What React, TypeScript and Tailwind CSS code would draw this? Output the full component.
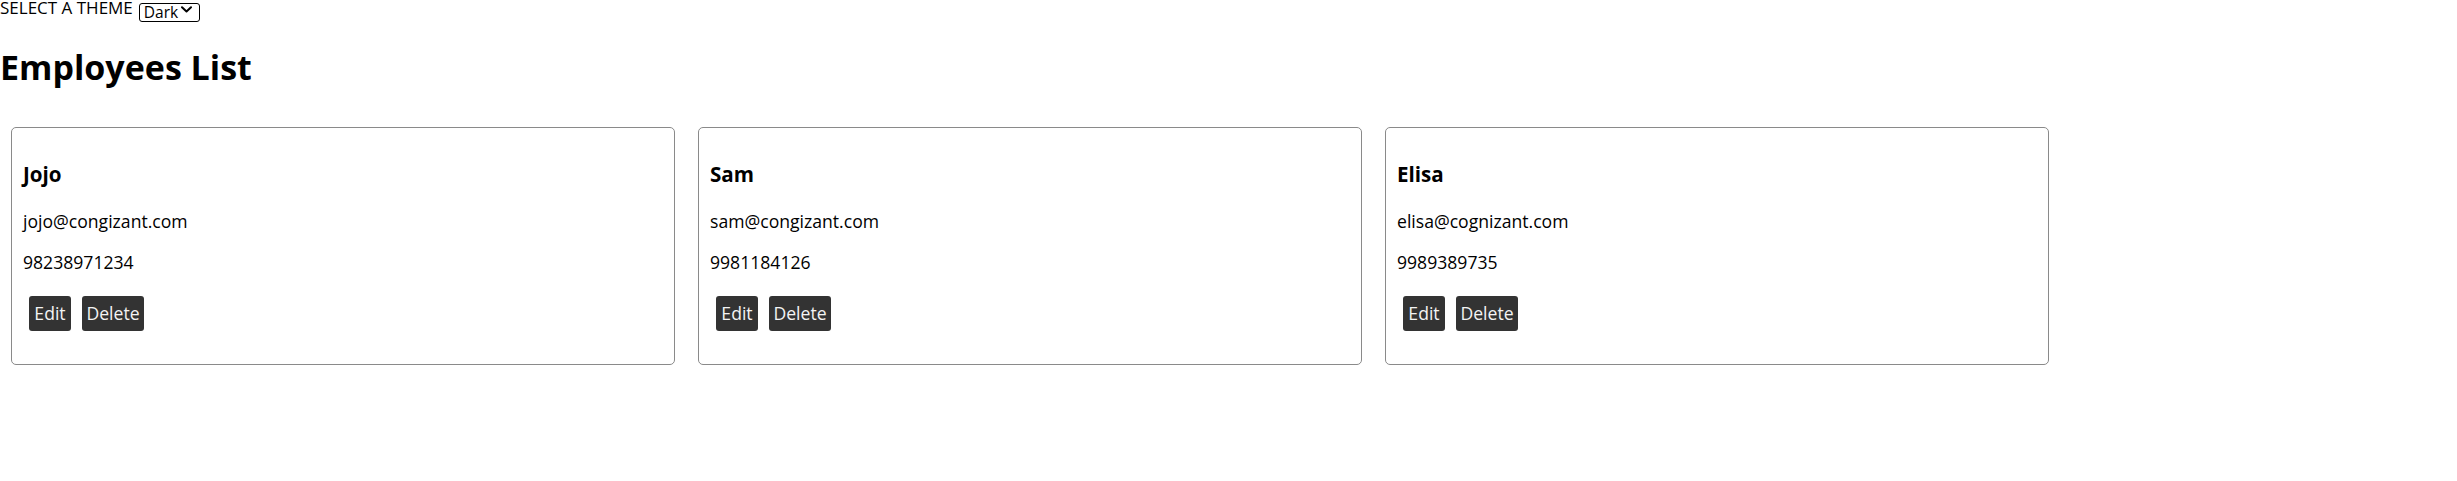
import React, { useState } from 'react';

interface Employee {
  name: string;
  email: string;
  phone: string;
}

const employees: Employee[] = [
  { name: 'Jojo', email: 'jojo@congizant.com', phone: '98238971234' },
  { name: 'Sam', email: 'sam@congizant.com', phone: '9981184126' },
  { name: 'Elisa', email: 'elisa@cognizant.com', phone: '9989389735' },
];

const EmployeeCard: React.FC<{ employee: Employee }> = ({ employee }) => {
  return (
    <div className="w-[664px] h-[238px] shrink-0 border border-[#8a8a8a] rounded-[5px] pt-[33px] px-[11px]">
      <h3 className="text-[20.6px] leading-[27px] font-bold text-black">{employee.name}</h3>
      <p className="mt-[21.5px] text-[17.6px] leading-[23.4px] text-black">{employee.email}</p>
      <p className="mt-[18.5px] text-[17.6px] leading-[23.4px] text-black">{employee.phone}</p>
      <div className="mt-[21.5px] pl-[6px] flex gap-[11px]">
        <button className="w-[42px] h-[35px] bg-[#333333] text-[#f4f4f4] rounded-[3px] text-[17.6px] leading-[23.4px] flex items-center justify-center">
          Edit
        </button>
        <button className="w-[62px] h-[35px] bg-[#333333] text-[#f4f4f4] rounded-[3px] text-[17.6px] leading-[23.4px] flex items-center justify-center">
          Delete
        </button>
      </div>
    </div>
  );
};

const App: React.FC = () => {
  const [theme, setTheme] = useState('Dark');

  return (
    <div className="w-[2457px] h-[481px] bg-white text-black font-['Open_Sans',sans-serif]">
      <div className="flex items-start h-[19px]">
        <span className="text-[17px] leading-[16px]">SELECT A THEME</span>
        <div className="relative ml-[6px] w-[61px] h-[19px]">
          <select
            value={theme}
            onChange={(e) => setTheme(e.target.value)}
            className="appearance-none w-full h-full border border-black rounded-[3px] bg-white pl-[4px] text-[15.5px] leading-[17px] text-black"
          >
            <option value="Dark">Dark</option>
            <option value="Light">Light</option>
          </select>
          <svg
            className="absolute right-[8px] top-[6px] w-[11px] h-[7px] pointer-events-none"
            viewBox="0 0 11 7"
            fill="none"
            stroke="black"
            strokeWidth={2}
            strokeLinecap="round"
            strokeLinejoin="round"
          >
            <path d="M1 1.2 L5.5 5.5 L10 1.2" />
          </svg>
        </div>
      </div>
      <h1 className="mt-[28px] text-[34px] leading-[40px] font-bold">Employees List</h1>
      <div className="mt-[40px] ml-[11px] flex gap-[23px]">
        {employees.map((emp) => (
          <EmployeeCard key={emp.name} employee={emp} />
        ))}
      </div>
    </div>
  );
};

export default App;
